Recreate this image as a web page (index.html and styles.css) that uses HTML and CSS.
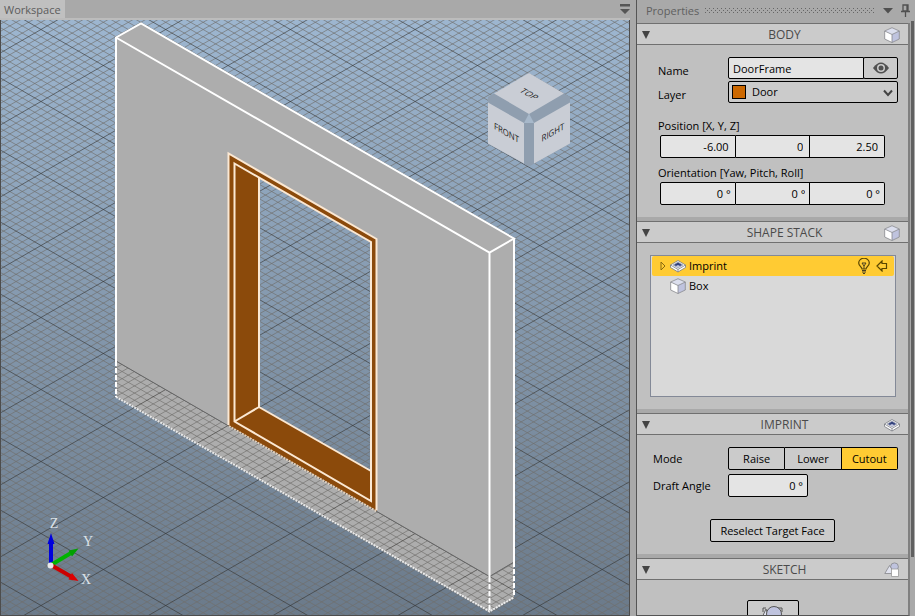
FILE: index.html
```html
<!DOCTYPE html>
<html lang="en">
<head>
<meta charset="utf-8">
<title>Workspace</title>
<link rel="stylesheet" href="styles.css">
</head>
<body>
<svg class="defs" aria-hidden="true">
  <symbol id="icon-box" viewBox="0 0 16 16">
    <path d="M8 .7 15.300 4v8L8 15.500.700 12V4z" fill="#fff"/>
    <path d="M8 .7 15.300 4 8 7.500.700 4z" fill="#dcdfee"/>
    <path d="M8 7.500 15.300 4v8L8 15.500z" fill="#bfc3de"/>
    <path d="M8 .7 15.300 4v8L8 15.500.700 12V4zM.7 4 8 7.500 15.300 4M8 7.500v8" fill="none" stroke="#85868c" stroke-width=".8"/>
  </symbol>
  <symbol id="icon-imprint" viewBox="0 0 16 16">
    <path d="M8 2.500 15.500 7v2.500L8 14 .5 9.500V7z" fill="#fff" stroke="#777a82" stroke-width=".8"/>
    <path d="M.5 7 8 11.500 15.500 7M8 11.500V14" fill="none" stroke="#777a82" stroke-width=".8"/>
    <path d="M8 4 13 7 8 10 3 7z" fill="#c5c9e2" stroke="#8b8e9a" stroke-width=".6"/>
    <path d="M8 4.500 12 7 10 8 8 7 6 8 4 7z" fill="#33427c"/>
  </symbol>
  <symbol id="icon-sketch" viewBox="0 0 16 16">
    <circle cx="10.500" cy="4.800" r="3.900" fill="#bfc3de" stroke="#85868c" stroke-width=".8"/>
    <path d="M5.500 3.500 10.500 11.500H.8z" fill="#e0e2ee" stroke="#85868c" stroke-width=".8"/>
    <path d="M7.500 7h7v7.500h-7z" fill="#fff" stroke="#999" stroke-width=".8"/>
  </symbol>
</svg>
<main class="app">
  <section class="workspace">
    <header class="tabs">
      <h1 class="tab">Workspace</h1>
      <button class="tool" aria-label="Window list"><svg width="10" height="10"><path d="M0 0h10v2.500H0zM0 5h10L5 10z" fill="#555"/></svg></button>
    </header>
    <svg class="scene" viewBox="1 20 628 595" preserveAspectRatio="xMinYMin slice" role="img" aria-label="Door frame model">
      <defs>
        <linearGradient id="sky" x1="0" y1="0" x2="0" y2="1">
          <stop offset="0" stop-color="#9db6d0"/><stop offset="1" stop-color="#6b7a8a"/>
        </linearGradient>
      </defs>
      <path d="M1 20h628v595H1z" fill="url(#sky)"/>
      <path d="M116 361 489.500 576.500 514 562V598L489.500 612 116 397z" fill="#adadad"/>
      <path id="grid-minor" class="grid minor"/>
      <path id="grid-major" class="grid major"/>
      <path d="M116 37 141 23 514 238V562L489.500 576.500 116 361zM259 178V407L371 471V242z" fill="#adadad" fill-rule="evenodd"/>
      <path d="M116 361 489.500 576.500 514 562" fill="none" stroke="#666"/>
      <path d="M228 153 377 239V511L228 425zM259 178V407L371 471V242z" fill="#8b4a0b" fill-rule="evenodd"/>
      <g class="edge door">
        <path d="M228.500 425V153.500L376.500 239V510"/>
        <path d="M234.500 163.500 371 242V501L234.500 421.500zM259 178V407L371 471M234.500 421.500 259 407"/>
        <path class="dotted" d="M229 426 377 511.500"/>
      </g>
      <g class="edge">
        <path d="M116 361V37.500L141 23.500 514 238.500 489.500 252.500 116 37.500M514 238.500V562M489.500 252.500V577"/>
        <path class="dashed" d="M116 361V397M489.500 577V611M514 562V597"/>
        <path class="dotted" d="M116 397 489.500 611.500 514 597.500"/>
      </g>
      <g class="cube">
        <path fill="#8f9eaf" d="M494 93.500 488 97V144L529 166.500 570 144V97L564 93.500z"/>
        <path fill="#c9cdd5" d="M529 73 564 93.500 529 114 494 93.500zM488 102.500 524 123V163.500L488 143.500zM570 102.500 534 123V163.500L570 143.500z"/>
        <path fill="#a7b8ca" d="M529 113.500 534 123H524z"/>
        <text transform="matrix(.87 .5 -.87 .5 529 94)" y="3">TOP</text>
        <text transform="matrix(.87 .5 0 1 506.500 133)" y="3">FRONT</text>
        <text transform="matrix(.87 -.5 0 1 553 132.500)" y="3">RIGHT</text>
      </g>
      <g class="axes">
        <path d="M51 565V543" stroke="#00d"/><path d="M47.500 544 51 533 54.500 544z" fill="#00d"/>
        <path d="M51 565 71 553" stroke="#00b400"/><path d="M68.500 550.500 78.500 548.500 72 556.500z" fill="#00a000"/>
        <path d="M51 565 71 576.500" stroke="#c00"/><path d="M72 573 78.500 581 68.500 579.500z" fill="#d00"/>
        <circle cx="50.500" cy="565.500" r="3" fill="#e8e8e8"/>
        <text x="54" y="528">Z</text><text x="88" y="546">Y</text><text x="86" y="584">X</text>
      </g>
    </svg>
  </section>

  <aside class="panel">
    <header class="panel-head">
      <h2>Properties</h2><span class="grip"></span>
      <button class="tool" aria-label="Menu"><svg width="10" height="6"><path d="M0 0h10L5 5.500z" fill="#505050"/></svg></button>
      <button class="tool" aria-label="Pin"><svg width="9" height="13"><path d="M2 1h5v6H2zM0 7.500h9M4.500 8v5M6 1v6" fill="none" stroke="#505050" stroke-width="1.300"/></svg></button>
    </header>
    <div class="scroller">
      <div class="sections">
        <section class="group">
          <h3><span class="fold"></span>BODY<svg class="icon"><use href="#icon-box"/></svg></h3>
          <div class="content body-fields">
            <div class="row"><label for="name">Name</label><input id="name" class="name" value="DoorFrame"><button class="eye" aria-label="Visible"><svg width="16" height="12"><path d="M0 6Q8-5 16 6Q8 17 0 6z" fill="#505050"/><circle cx="8" cy="6" r="4" fill="#ccc"/><circle cx="8" cy="6" r="2.500" fill="#505050"/></svg></button></div>
            <div class="row"><label for="layer">Layer</label><div class="select"><select id="layer"><option>Door</option></select><span class="swatch"></span><svg class="chevron" width="10" height="8"><path d="M1 1.500 5 6 9 1.500" fill="none" stroke="#444" stroke-width="2"/></svg></div></div>
            <fieldset><legend>Position [X, Y, Z]</legend><div class="triple"><input aria-label="X" value="-6.00"><input aria-label="Y" value="0"><input aria-label="Z" value="2.50"></div></fieldset>
            <fieldset><legend>Orientation [Yaw, Pitch, Roll]</legend><div class="triple degrees"><input aria-label="Yaw" value="0 °"><input aria-label="Pitch" value="0 °"><input aria-label="Roll" value="0 °"></div></fieldset>
          </div>
        </section>
        <section class="group">
          <h3><span class="fold"></span>SHAPE STACK<svg class="icon"><use href="#icon-box"/></svg></h3>
          <div class="content stack">
            <ul class="tree">
              <li class="selected"><svg width="6" height="10"><path d="M1 1 5 5 1 9z" fill="none" stroke="#8a6a10"/></svg><svg class="icon"><use href="#icon-imprint"/></svg><span>Imprint</span>
                <svg class="bulb" width="12" height="16"><path d="M4 11C4 9 .700 8 .700 5A5 4.500 0 0 1 11.300 5C11.300 8 8 9 8 11z" fill="none" stroke="#5a4600" stroke-width="1.200"/><path d="M4 5h4L6 8zM6 8v3M4 12.500h4M4 14h4M5 15.500h2" fill="none" stroke="#4a4020"/></svg>
                <svg width="12" height="12"><path d="M1 6 6 1V3.500H10.500V8.500H6V11z" fill="none" stroke="#5a4600" stroke-width="1.200"/></svg></li>
              <li><svg width="6" height="10"></svg><svg class="icon"><use href="#icon-box"/></svg><span>Box</span></li>
            </ul>
          </div>
        </section>
        <section class="group">
          <h3><span class="fold"></span>IMPRINT<svg class="icon"><use href="#icon-imprint"/></svg></h3>
          <div class="content imprint-fields">
            <div class="row"><span class="caption">Mode</span><div class="segmented"><button>Raise</button><button>Lower</button><button class="active">Cutout</button></div></div>
            <div class="row"><label for="draft">Draft Angle</label><input id="draft" class="draft" value="0 °"></div>
            <button class="action">Reselect Target Face</button>
          </div>
        </section>
        <section class="group">
          <h3><span class="fold"></span>SKETCH<svg class="icon"><use href="#icon-sketch"/></svg></h3>
          <div class="content sketch-fields">
            <button class="big" aria-label="Edit sketch"><svg width="26" height="26"><path d="M6 3 0 16H11z" fill="#e0e2ee" stroke="#666"/><path d="M3 6V2h3M18 2h4v4" fill="none" stroke="#555"/><circle cx="14" cy="8" r="7.500" fill="#bfc3de" stroke="#555"/></svg></button>
          </div>
        </section>
      </div>
      <div class="track"><div class="thumb"></div></div>
    </div>
  </aside>
</main>
<script src="grid.js"></script>
</body>
</html>
```
FILE: styles.css
```css
* { box-sizing: border-box; }
body { margin: 0; font: 11px/16px "Open Sans", "Noto Sans", sans-serif; color: #000; background: #a9a9a9; }
h1, h2, h3, ul, fieldset { margin: 0; padding: 0; border: 0; font-weight: 400; list-style: none; }
input, button, select { font: inherit; color: inherit; margin: 0; border: 1px solid #000; border-radius: 2px; }
input { min-width: 0; height: 23px; padding: 0 4px; background: #e4e4e4; }
button { padding: 0; background: #cbcbcb; }
svg { display: block; flex: none; }
.defs { position: absolute; width: 0; height: 0; }
.icon { width: 16px; height: 16px; }
.app { display: flex; height: 100vh; overflow: hidden; }

.workspace { flex: 1; min-width: 0; display: flex; flex-direction: column; }
.tabs { display: flex; align-items: center; justify-content: space-between; height: 20px; border-bottom: 2px solid #bcbcbc; }
.tab { padding: 2px 4px 0; font-size: 11px; line-height: 16px; color: #5c5c5c; background: #c0c0c0; }
.tool { border: 0; background: none; }
.scene { flex: 1; min-height: 0; width: 100%; border: solid #4d4d4d; border-width: 0 1px 1px; }
.grid { fill: none; stroke-width: 1; }
.minor { stroke: #706e6c; opacity: .65; }
.major { stroke: #33322f; opacity: .6; }
.edge { fill: none; stroke: #fff; stroke-width: 2; }
.door { stroke: #fbe8d3; }
.dashed { stroke-dasharray: 5 2; }
.dotted { stroke-dasharray: 2 1; opacity: .8; }
.cube text { font-size: 9px; text-anchor: middle; fill: #222; }
.axes path { stroke-width: 4; }
.axes text { font: 14px "Liberation Serif", serif; text-anchor: middle; fill: #dce2e8; }

.panel { display: flex; flex-direction: column; width: 285px; padding-left: 6px; }
.panel-head { display: flex; align-items: center; gap: 8px; height: 23px; padding: 0 5px 2px 9px; border-left: 1px solid #555; color: #606060; }
.panel-head h2 { margin-right: -2px; font-size: 11px; font-weight: 400; }
.grip { flex: 1; height: 6px; background: conic-gradient(at 1px 1px, transparent 75%, #666 0) 0 0/4px 4px, conic-gradient(at 1px 1px, transparent 75%, #666 0) 2px 2px/4px 4px; }
.scroller { flex: 1; min-height: 0; display: flex; }
.sections { flex: 1; min-width: 0; overflow: hidden; border: solid #555; border-width: 0 2px 1px 1px; border-right-color: #808080; }
.track { width: 5px; margin-top: -2px; padding: 0 1px 0 1px; }
.thumb { height: 90%; background: #606060; }
.group { margin-bottom: 4px; }
.group h3 { display: flex; align-items: center; justify-content: space-between; height: 22px; padding: 1px 8px 0 5px; border: solid #707070; border-width: 1px 0; background: #cbcbcb; font-size: 12px; color: #4a4a4a; }
.fold { width: 43px; }
.fold::before { content: ""; display: block; width: 0; border: solid transparent; border-width: 8px 4px 0; border-top-color: #444; }
.content { background: #c0c0c0; }
.row { display: flex; align-items: center; }
.row label, .caption { flex: 1; }

.body-fields { padding: 12px 10px 12px 21px; }
.body-fields .row { height: 22px; margin-bottom: 2px; }
.body-fields .row label { padding-top: 6px; }
.name { width: 136px; height: 22px; border-radius: 2px 0 0 2px; }
.eye { display: flex; align-items: center; justify-content: center; width: 35px; height: 22px; margin-left: -1px; }
.select { position: relative; width: 170px; }
select { appearance: none; width: 100%; height: 22px; padding: 0 23px; background: #cbcbcb; }
.swatch { position: absolute; left: 4px; top: 4px; width: 14px; height: 14px; border: 1px solid #000; background: #cc6800; pointer-events: none; }
.chevron { position: absolute; right: 5px; top: 8px; pointer-events: none; }
legend { padding: 0; line-height: 18px; }
fieldset { padding-top: 0; margin-top: 6px; }
.body-fields .row + fieldset { margin-top: 14px; }
.triple { display: flex; width: 225px; margin-left: 2px; }
.triple input { flex: 1; padding: 0 6px; text-align: right; border-left-width: 0; border-radius: 0; }
.triple input:first-child { border-left-width: 1px; border-radius: 2px 0 0 2px; }
.triple input:last-child { border-radius: 0 2px 2px 0; }
.degrees input { padding: 0 4px; }

.stack { padding: 12px 12px 12px 13px; }
.tree { height: 142px; padding: 0 1px; border: 1px solid #838997; background: #d9d9d9; }
.tree li { display: flex; align-items: center; height: 20px; padding: 0 6px 0 8px; gap: 4px; border-radius: 2px; }
.tree span { margin-left: -1px; }
.selected { background: #ffcb33; }
.bulb { margin: 0 2px 0 auto; }

.imprint-fields { padding: 12px 10px 12px 16px; }
.imprint-fields .row { margin-bottom: 4px; }
.segmented { display: flex; width: 170px; }
.segmented button { flex: 1; height: 23px; border-radius: 0; border-left-width: 0; }
.segmented button:first-child { border-left-width: 1px; border-radius: 2px 0 0 2px; }
.segmented button:last-child { border-radius: 0 2px 2px 0; }
.segmented .active { background: #ffcb33; }
.draft { width: 80px; margin-right: 90px; text-align: right; }
.action { display: block; width: 125px; height: 23px; margin: 22px auto 0 57px; }
.sketch-fields { padding: 20px 0; }
.big { display: flex; justify-content: center; width: 52px; height: 40px; margin: 0 auto; padding-top: 5px; }
```
FILE: grid.js
```js
// Isometric ground grid: ten minor cells to each major cell.
const cellHeight = 72;
const slope = 1 / Math.sqrt(3);
const anchor = { x: 41, y: 101.5 };
const size = { width: 630, height: 616 };

function lines(step, skip) {
  let d = '';
  for (let i = -120; i < 180; i++) {
    if (skip && i % skip === 0) continue;
    const y = anchor.y + i * step;
    const left = anchor.x * slope;
    const right = (size.width - anchor.x) * slope;
    d += `M0 ${y - left}L${size.width} ${y + right}`;
    d += `M0 ${y + left}L${size.width} ${y - right}`;
  }
  return d;
}

document.getElementById('grid-minor').setAttribute('d', lines(cellHeight / 10, 10));
document.getElementById('grid-major').setAttribute('d', lines(cellHeight, 0));
```
